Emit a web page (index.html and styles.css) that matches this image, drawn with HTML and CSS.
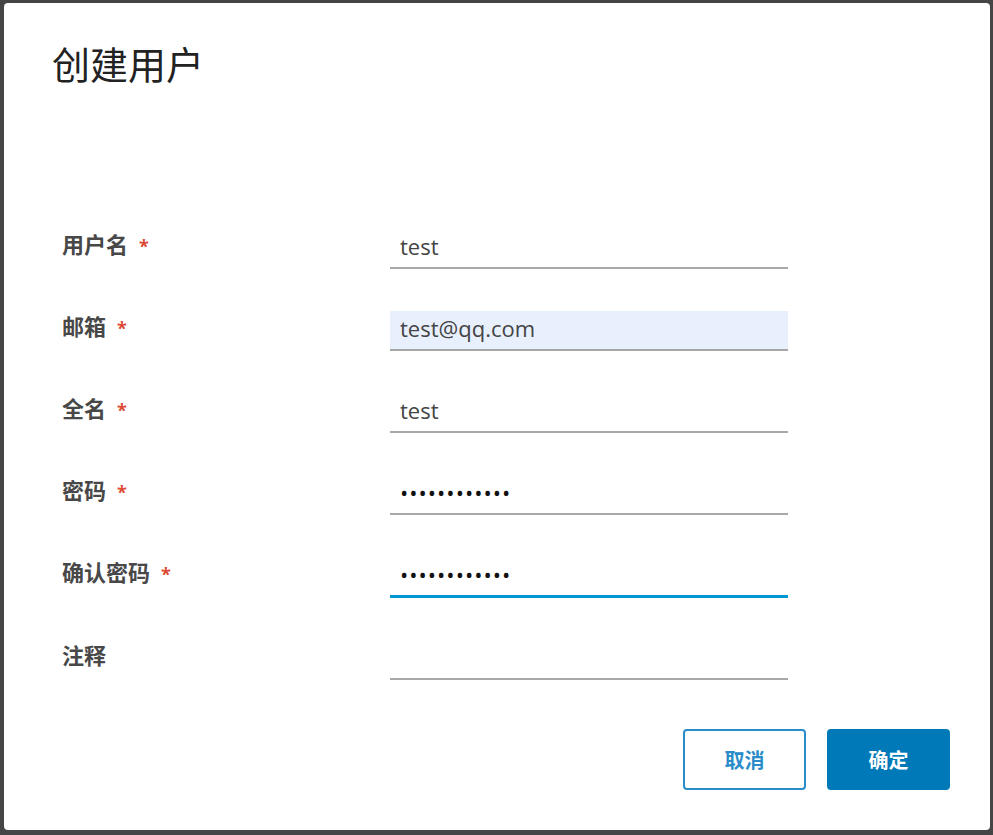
FILE: index.html
```html
<!DOCTYPE html>
<html lang="zh-CN">
<head>
  <meta charset="UTF-8">
  <title>创建用户</title>
  <link rel="stylesheet" href="styles.css">
</head>
<body>
  <div class="dialog">
    <div class="dialog-title">创建用户</div>
    <form class="form">
      <label class="label" for="username">用户名<span class="req">*</span></label>
      <input class="field" id="username" type="text" value="test">

      <label class="label" for="email">邮箱<span class="req">*</span></label>
      <input class="field autofill" id="email" type="text" value="test@qq.com">

      <label class="label" for="fullname">全名<span class="req">*</span></label>
      <input class="field" id="fullname" type="text" value="test">

      <label class="label" for="password">密码<span class="req">*</span></label>
      <input class="field secret" id="password" type="password" value="Harbor123456">

      <label class="label" for="confirm">确认密码<span class="req">*</span></label>
      <input class="field secret focused" id="confirm" type="password" value="Harbor123456">

      <label class="label" for="comment">注释</label>
      <input class="field" id="comment" type="text" value="">
    </form>
    <div class="footer">
      <button class="btn btn-outline" type="button">取消</button>
      <button class="btn btn-primary" type="button">确定</button>
    </div>
  </div>
</body>
</html>
```

FILE: styles.css
```css
html, body {
  margin: 0;
  height: 100%;
}
body {
  background-color: #454545;
  font-family: "Noto Sans CJK SC", "Open Sans", sans-serif;
  overflow: hidden;
}
.dialog {
  box-sizing: border-box;
  margin: 3px 3px 0 4px;
  height: 827px;
  background-color: #fff;
  border-radius: 4px;
  padding: 37px 40px 0 48px;
  display: flex;
  flex-direction: column;
}
.dialog-title {
  font-size: 38px;
  line-height: 1.2;
  color: #222;
  font-weight: 400;
}
.form {
  margin: 143px 0 0 10px;
  display: grid;
  grid-template-columns: 328px 398px;
  grid-auto-rows: 40px;
  row-gap: 42.2px;
}
.label {
  font-size: 22px;
  line-height: 28px;
  font-weight: bold;
  color: #484848;
}
.req {
  font-family: "Open Sans", sans-serif;
  font-size: 18px;
  color: #dc4a33;
  margin-left: 11px;
}
.field {
  box-sizing: border-box;
  height: 40px;
  width: 100%;
  margin: 0;
  border: none;
  border-bottom: 2px solid #a8a8a8;
  padding: 0 10px 4px;
  font-family: "Open Sans", sans-serif;
  font-size: 22px;
  color: #444;
  background: transparent;
  outline: none;
}
.field.secret {
  letter-spacing: 1px;
  color: #111;
}
.field.autofill {
  background-color: #e8f0fe;
}
.field.focused {
  border-bottom: 3px solid #0095d3;
  height: 41px;
}
.footer {
  margin-top: 49px;
  display: flex;
  justify-content: flex-end;
  gap: 21px;
}
.btn {
  box-sizing: border-box;
  width: 123px;
  height: 61px;
  border-radius: 4px;
  font-family: "Noto Sans CJK SC", sans-serif;
  font-size: 20px;
  font-weight: bold;
  cursor: pointer;
}
.btn-outline {
  background-color: #fff;
  border: 2px solid #2a8cc8;
  color: #2a8cc8;
}
.btn-primary {
  background-color: #0079b8;
  border: 2px solid #0079b8;
  color: #fff;
}
```
